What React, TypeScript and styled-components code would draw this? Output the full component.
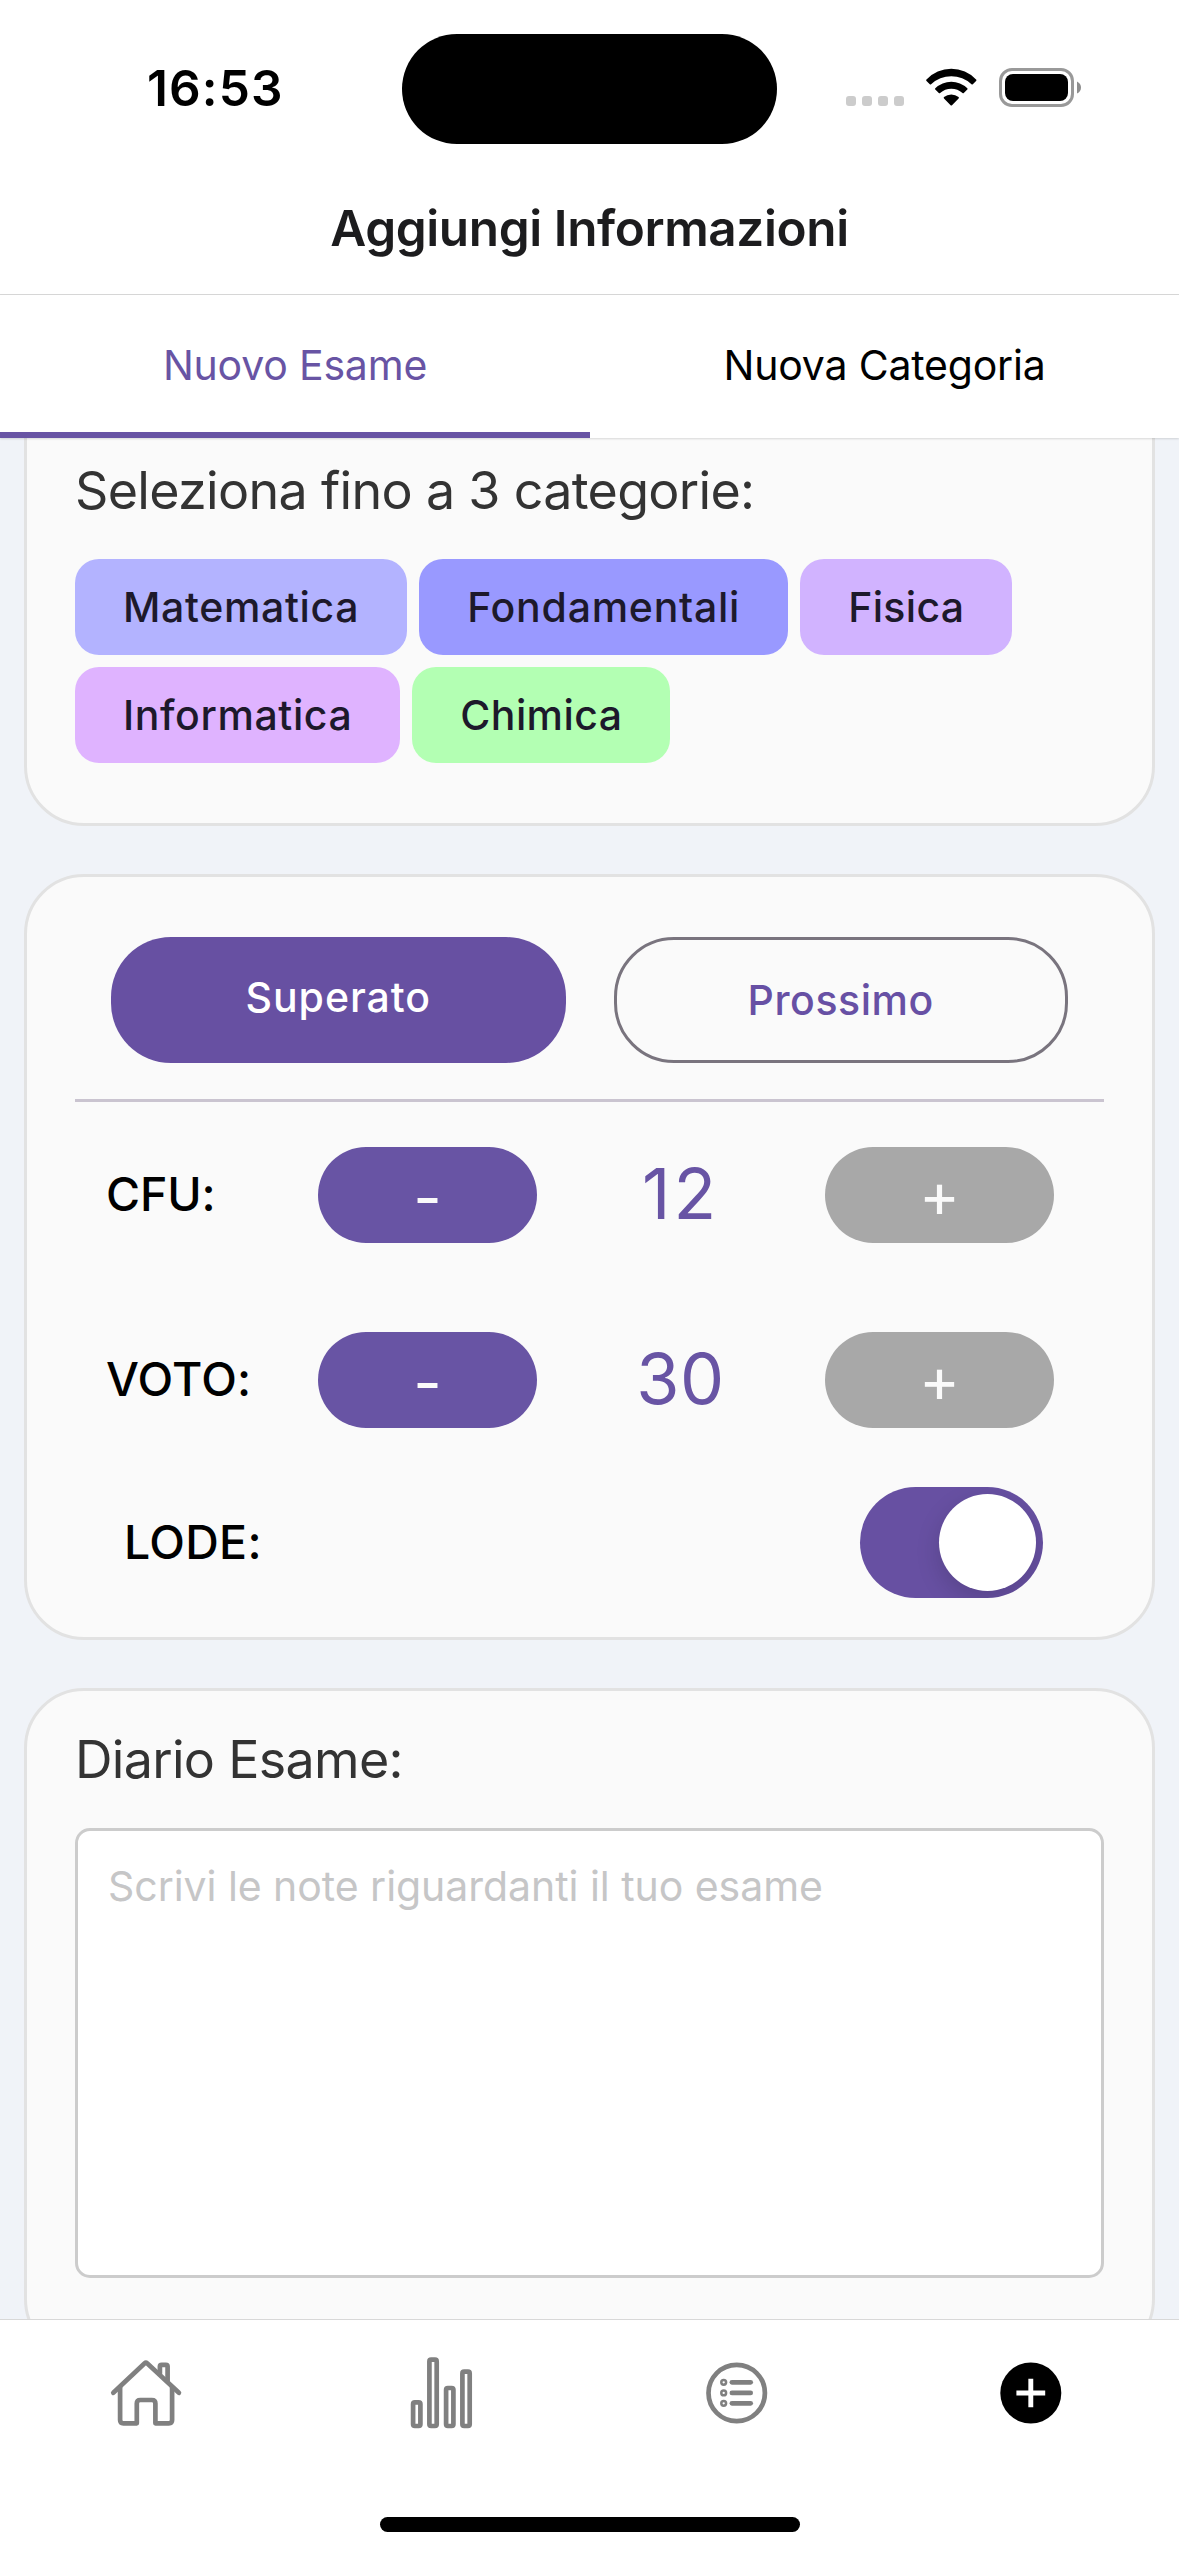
import React, { useState } from "react";
import styled, { createGlobalStyle } from "styled-components";

const GlobalStyle = createGlobalStyle`
  * { box-sizing: border-box; }
  html, body { margin: 0; padding: 0; }
  body { font-family: Inter, "Liberation Sans", sans-serif; background: #fff; }
  button { font-family: inherit; border: 0; padding: 0; margin: 0; }
`;

const Screen = styled.div`
  width: 1179px;
  height: 2556px;
  display: flex;
  flex-direction: column;
  background: #fff;
  overflow: hidden;
`;

/* ---- status bar ---- */
const StatusBar = styled.div`
  flex: none;
  height: 177px;
  padding: 33px 0 0 147px;
  display: flex;
  align-items: flex-start;
`;
const Clock = styled.div`
  width: 255px;
  font-size: 49.5px;
  font-weight: 600;
  line-height: 110px;
  letter-spacing: 1.1px;
  color: #000;
`;
const Island = styled.div`
  width: 375px;
  height: 110px;
  margin-top: 1px;
  border-radius: 55px;
  background: #000;
`;
const StatusIcons = styled.div`
  height: 74px;
  margin-left: 69px;
  display: flex;
  align-items: flex-end;
`;
const SignalDots = styled.div`
  display: flex;
  gap: 6px;
  margin: 0 22px 1px 0;
`;
const Dot = styled.span`
  width: 10px;
  height: 10px;
  border-radius: 3px;
  background: #ccc;
`;
const WifiSvg = styled.svg`
  display: block;
  width: 51px;
  height: 39px;
  margin-right: 22px;
`;
const BatterySvg = styled.svg`
  display: block;
  width: 83px;
  height: 39px;
`;

/* ---- header and tabs ---- */
const Header = styled.header`
  flex: none;
  height: 118px;
  border-bottom: 1px solid #d8d8d8;
  text-align: center;
`;
const Title = styled.h1`
  margin: 0;
  font-size: 49.5px;
  font-weight: 600;
  line-height: 102px;
  letter-spacing: -0.4px;
  color: #1c1c1e;
`;
const Tabs = styled.div`
  flex: none;
  position: relative;
  z-index: 1;
  height: 143px;
  display: grid;
  grid-template-columns: 590px 589px;
  background: #fff;
  box-shadow: 0 1px 2px rgba(0, 0, 0, 0.14);
`;
const Tab = styled.button<{ $active: boolean }>`
  display: flex;
  flex-direction: column;
  justify-content: space-between;
  padding-top: 4px;
  background: none;
  color: ${(p) => (p.$active ? "#6854a4" : "#000")};
`;
const TabLabel = styled.span`
  width: 100%;
  font-size: 41px;
  line-height: 133px;
  letter-spacing: -0.2px;
`;
const TabIndicator = styled.span<{ $active: boolean }>`
  width: 100%;
  height: 6px;
  background: ${(p) => (p.$active ? "#6854a4" : "transparent")};
`;

/* ---- content ---- */
const Content = styled.main`
  flex: 1;
  min-height: 0;
  overflow: hidden;
  background: #f0f3f8;
`;
const CardList = styled.div`
  margin-top: -100px;
  padding: 0 24px;
  display: flex;
  flex-direction: column;
  gap: 48px;
`;
const Card = styled.section<{ $top: number; $bottom: number }>`
  flex: none;
  padding: ${(p) => p.$top}px 48px ${(p) => p.$bottom}px;
  border: 3px solid #e2e2e2;
  border-radius: 60px;
  background: #fafafa;
`;
const CardTitle = styled.h2`
  margin: 0 0 36px;
  font-size: 52px;
  font-weight: 400;
  line-height: 64px;
  letter-spacing: -0.69px;
  color: #333;
`;
const Chips = styled.div`
  display: flex;
  flex-wrap: wrap;
  gap: 12px;
`;
const Chip = styled.button<{ $color: string; $tracking: number }>`
  height: 96px;
  padding: 0 48px;
  border-radius: 24px;
  font-size: 41px;
  font-weight: 500;
  line-height: 96px;
  letter-spacing: ${(p) => p.$tracking}px;
  color: #1d192b;
  background: ${(p) => p.$color};
`;

const Segments = styled.div`
  display: grid;
  grid-template-columns: 1fr 1fr;
  gap: 48px;
  padding: 0 36px;
`;
const Segment = styled.button<{ $filled: boolean }>`
  height: 126px;
  border: ${(p) => (p.$filled ? "0" : "3px solid #79747e")};
  padding-bottom: ${(p) => (p.$filled ? 6 : 0)}px;
  border-radius: 60px;
  font-size: 41px;
  font-weight: 500;
  line-height: 120px;
  letter-spacing: ${(p) => (p.$filled ? 0.93 : 0.56)}px;
  color: ${(p) => (p.$filled ? "#fff" : "#6750a4")};
  background: ${(p) => (p.$filled ? "#6750a2" : "transparent")};
`;
const Divider = styled.hr`
  height: 3px;
  margin: 36px 0 45px;
  border: 0;
  background: #cac4d0;
`;
const StepperRow = styled.div`
  height: 96px;
  margin-bottom: 89px;
  padding-left: 31px;
  display: grid;
  grid-template-columns: 212px 219px 288px 229px;
  & + & { margin-bottom: 59px; }
`;
const FieldLabel = styled.span<{ $tracking: number }>`
  font-size: 46.5px;
  font-weight: 500;
  line-height: 94px;
  letter-spacing: ${(p) => p.$tracking}px;
  color: #000;
`;
const StepButton = styled.button<{ $muted?: boolean }>`
  height: 96px;
  padding-top: ${(p) => (p.$muted ? 0 : 5)}px;
  border-radius: 48px;
  font-size: 62px;
  font-weight: 400;
  line-height: ${(p) => (p.$muted ? 96 : 91)}px;
  color: #fafafa;
  background: ${(p) => (p.$muted ? "#a8a8a8" : "#6854a4")};
`;
const StepValue = styled.span<{ $tracking: number }>`
  padding-right: 1px;
  text-align: center;
  font-size: 70px;
  line-height: 94px;
  letter-spacing: ${(p) => p.$tracking}px;
  color: #6854a4;
`;
const SwitchRow = styled.div`
  height: 111px;
  padding: 0 61px 0 49px;
  display: flex;
  align-items: center;
  justify-content: space-between;

  ${FieldLabel} { padding-bottom: 2px; }
`;
const Switch = styled.button<{ $on: boolean }>`
  width: 183px;
  height: 111px;
  padding: 0 7px;
  border-radius: 56px;
  display: flex;
  align-items: center;
  justify-content: ${(p) => (p.$on ? "flex-end" : "flex-start")};
  background: ${(p) => (p.$on ? "#6750a2" : "#e9e9ea")};
  overflow: hidden;
`;
const Knob = styled.span`
  width: 97px;
  height: 97px;
  border-radius: 50%;
  background: #fff;
  box-shadow: 0 9px 24px rgba(0, 0, 0, 0.15);
`;
const Notes = styled.textarea`
  display: block;
  width: 100%;
  height: 450px;
  padding: 30px;
  border: 3px solid #ccc;
  border-radius: 15px;
  outline: 0;
  resize: none;
  font-family: inherit;
  font-size: 41px;
  line-height: 50px;
  letter-spacing: -0.05px;
  color: #333;
  background: #fff;
  &::placeholder { color: #c6c6c7; opacity: 1; }
`;

/* ---- bottom navigation ---- */
const BottomNav = styled.nav`
  flex: none;
  height: 237px;
  border-top: 1px solid #d8d8d8;
  display: flex;
  flex-direction: column;
  align-items: center;
  background: #fff;
`;
const NavItems = styled.div`
  width: 100%;
  height: 145px;
  display: grid;
  grid-template-columns: repeat(4, 1fr);
`;
const NavButton = styled.button`
  display: flex;
  align-items: center;
  justify-content: center;
  background: none;
`;
const NavSvg = styled.svg`
  width: 80px;
  height: 80px;
  fill: none;
  stroke: #808080;
  stroke-width: 4.7px;
  stroke-linecap: round;
  stroke-linejoin: round;
`;
const Bullet = styled.circle`
  stroke-width: 2.5px;
`;
const Disc = styled.circle`
  fill: #000;
  stroke: none;
`;
const Cross = styled.path`
  stroke: #fff;
  stroke-width: 4.9px;
  stroke-linecap: butt;
`;
const HomeIndicator = styled.div`
  width: 420px;
  height: 15px;
  margin-top: 52px;
  border-radius: 8px;
  background: #000;
`;

const categories = [
  { name: "Matematica", color: "#b3b3ff", tracking: 0.65 },
  { name: "Fondamentali", color: "#9999ff", tracking: 0.75 },
  { name: "Fisica", color: "#d1b3ff", tracking: 0.33 },
  { name: "Informatica", color: "#dfb3ff", tracking: 0.6 },
  { name: "Chimica", color: "#b3ffb3", tracking: 0.4 },
];

const WifiIcon = () => (
  <WifiSvg viewBox="0 0 51 39">
    <path d="M.5 11.5A34 34 0 0 1 50.1 11.5Q50.8 12.2 50.1 12.9L46.8 16.2Q46.2 16.8 45.5 16.2A29.5 29.5 0 0 0 5.1 16.2Q4.4 16.8 3.8 16.2L.5 12.9Q-.2 12.2.5 11.5Z" />
    <path d="M9.3 20.2A23 23 0 0 1 41.3 20.2Q42 20.9 41.3 21.6L37.8 25Q37.2 25.5 36.5 25A16.8 16.8 0 0 0 14.1 25Q13.4 25.5 12.8 25L9.3 21.6Q8.6 20.9 9.3 20.2Z" />
    <path d="M18 29.1A11.6 11.6 0 0 1 32.6 29.1Q33.3 29.8 32.6 30.5L26 37.2Q25.3 37.9 24.6 37.2L18 30.5Q17.3 29.8 18 29.1Z" />
  </WifiSvg>
);

const BatteryIcon = () => (
  <BatterySvg viewBox="0 0 83 39">
    <rect x="1.5" y="1.5" width="72" height="36" rx="11.5" fill="none" stroke="#999" strokeWidth="3" />
    <rect x="6" y="6" width="63" height="27" rx="8" />
    <path d="M78 13.5Q82 15.5 82 19.5T78 25.5Z" fill="#8e8e8e" />
  </BatterySvg>
);

const HomeIcon = () => (
  <NavSvg viewBox="0 0 80 80">
    <path d="M6.3 39.8 37.7 10.3Q38.9 9.2 40.1 10.3L71.9 39.8" />
    <path d="M13.1 34V67q0 3.3 3.3 3.3H29.8V50.5q0-3.5 3.5-3.5H44.9q3.5 0 3.5 3.5V70.3H61.8q3.3 0 3.3-3.3V34" />
    <path d="M52.9 20.5V13.5q0-1.7 1.7-1.7H58.9q1.7 0 1.7 1.7V28" />
  </NavSvg>
);

const StatsIcon = () => (
  <NavSvg viewBox="0 0 80 80">
    <rect x="11.1" y="49.4" width="7.3" height="23.6" rx="1.7" />
    <rect x="27.4" y="6.7" width="7.3" height="66.3" rx="1.7" />
    <rect x="44.1" y="35" width="7.3" height="38" rx="1.7" />
    <rect x="60.4" y="18.7" width="7.3" height="54.3" rx="1.7" />
  </NavSvg>
);

const ListIcon = () => (
  <NavSvg viewBox="0 0 80 80">
    <circle cx="39.7" cy="40" r="28.2" />
    {[29.3, 39.9, 50.3].map((y) => (
      <g key={y}>
        <Bullet cx="26.7" cy={y} r="2.4" />
        <path d={`M34.9 ${y}H53.7`} />
      </g>
    ))}
  </NavSvg>
);

const AddIcon = () => (
  <NavSvg viewBox="0 0 80 80">
    <Disc cx="38.8" cy="40" r="30.5" />
    <Cross d="M24.4 40H53.2M38.8 25.7V54.3" />
  </NavSvg>
);

interface StepperProps {
  label: string;
  labelTracking: number;
  value: number;
  valueTracking: number;
  onDecrease: () => void;
}

const Stepper = ({ label, labelTracking, value, valueTracking, onDecrease }: StepperProps) => (
  <StepperRow>
    <FieldLabel $tracking={labelTracking}>{label}</FieldLabel>
    <StepButton onClick={onDecrease}>-</StepButton>
    <StepValue $tracking={valueTracking}>{value}</StepValue>
    <StepButton $muted>+</StepButton>
  </StepperRow>
);

export default function App() {
  const [tab, setTab] = useState(0);
  const [passed, setPassed] = useState(true);
  const [cfu, setCfu] = useState(12);
  const [grade, setGrade] = useState(30);
  const [honours, setHonours] = useState(true);

  return (
    <>
      <GlobalStyle />
      <Screen>
        <StatusBar>
          <Clock>16:53</Clock>
          <Island />
          <StatusIcons>
            <SignalDots>
              <Dot />
              <Dot />
              <Dot />
              <Dot />
            </SignalDots>
            <WifiIcon />
            <BatteryIcon />
          </StatusIcons>
        </StatusBar>

        <Header>
          <Title>Aggiungi Informazioni</Title>
        </Header>

        <Tabs>
          {["Nuovo Esame", "Nuova Categoria"].map((name, i) => (
            <Tab key={name} $active={tab === i} onClick={() => setTab(i)}>
              <TabLabel>{name}</TabLabel>
              <TabIndicator $active={tab === i} />
            </Tab>
          ))}
        </Tabs>

        <Content>
          <CardList>
            <Card $top={118} $bottom={60}>
              <CardTitle>Seleziona fino a 3 categorie:</CardTitle>
              <Chips>
                {categories.map((c) => (
                  <Chip key={c.name} $color={c.color} $tracking={c.tracking}>
                    {c.name}
                  </Chip>
                ))}
              </Chips>
            </Card>

            <Card $top={60} $bottom={39}>
              <Segments>
                <Segment $filled={passed} onClick={() => setPassed(true)}>
                  Superato
                </Segment>
                <Segment $filled={!passed} onClick={() => setPassed(false)}>
                  Prossimo
                </Segment>
              </Segments>
              <Divider />
              <Stepper
                label="CFU:"
                labelTracking={-0.14}
                value={cfu}
                valueTracking={3}
                onDecrease={() => setCfu(cfu - 1)}
              />
              <Stepper
                label="VOTO:"
                labelTracking={0.21}
                value={grade}
                valueTracking={0.6}
                onDecrease={() => setGrade(grade - 1)}
              />
              <SwitchRow>
                <FieldLabel $tracking={0.3}>LODE:</FieldLabel>
                <Switch $on={honours} onClick={() => setHonours(!honours)}>
                  <Knob />
                </Switch>
              </SwitchRow>
            </Card>

            <Card $top={37} $bottom={78}>
              <CardTitle>Diario Esame:</CardTitle>
              <Notes placeholder="Scrivi le note riguardanti il tuo esame" />
            </Card>
          </CardList>
        </Content>

        <BottomNav>
          <NavItems>
            <NavButton>
              <HomeIcon />
            </NavButton>
            <NavButton>
              <StatsIcon />
            </NavButton>
            <NavButton>
              <ListIcon />
            </NavButton>
            <NavButton>
              <AddIcon />
            </NavButton>
          </NavItems>
          <HomeIndicator />
        </BottomNav>
      </Screen>
    </>
  );
}
